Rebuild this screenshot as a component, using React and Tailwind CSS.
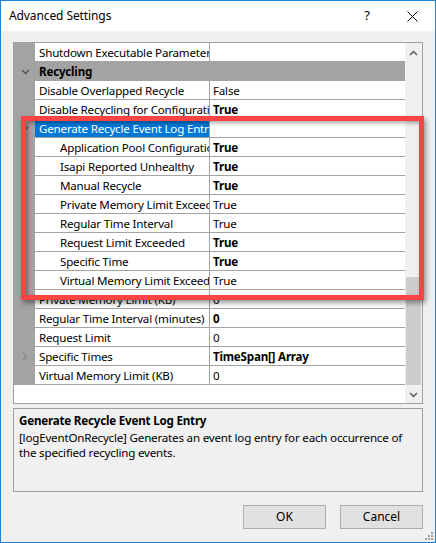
const font = { fontFamily: '"Noto Sans", "Liberation Sans", sans-serif' };

const rows = [
  { name: 'Shutdown Executable Parameter', value: '' },
  { name: 'Recycling', category: true, chevron: 'down' },
  { name: 'Disable Overlapped Recycle', value: 'False' },
  { name: 'Disable Recycling for Configuration Changes', value: 'True', bold: true },
  { name: 'Generate Recycle Event Log Entry', value: '', selected: true, chevron: 'down' },
  { name: 'Application Pool Configuration Changed', value: 'True', bold: true, indent: true },
  { name: 'Isapi Reported Unhealthy', value: 'True', bold: true, indent: true },
  { name: 'Manual Recycle', value: 'True', bold: true, indent: true },
  { name: 'Private Memory Limit Exceeded', value: 'True', indent: true },
  { name: 'Regular Time Interval', value: 'True', indent: true },
  { name: 'Request Limit Exceeded', value: 'True', bold: true, indent: true },
  { name: 'Specific Time', value: 'True', bold: true, indent: true },
  { name: 'Virtual Memory Limit Exceeded', value: 'True', indent: true },
  { name: 'Private Memory Limit (KB)', value: '0' },
  { name: 'Regular Time Interval (minutes)', value: '0', bold: true },
  { name: 'Request Limit', value: '0' },
  { name: 'Specific Times', value: 'TimeSpan[] Array', bold: true, chevron: 'right' },
  { name: 'Virtual Memory Limit (KB)', value: '0' },
];

const Chevron = ({ dir }) => (
  <svg width="9" height="9" viewBox="0 0 9 9" fill="none" stroke="#505050" strokeWidth="1.3">
    {dir === 'down' && <path d="M1 3 L4.5 6.5 L8 3" />}
    {dir === 'right' && <path d="M3 1 L6.5 4.5 L3 8" stroke="#888" />}
    {dir === 'up' && <path d="M1 6 L4.5 2.5 L8 6" />}
  </svg>
);

const Row = ({ r }) => {
  if (r.category) {
    return (
      <div className="flex h-[19px] bg-[#a3a3a3] border-b border-[#a3a3a3]">
        <div className="w-[21px] flex items-center justify-center pl-[1px]">
          <Chevron dir="down" />
        </div>
        <div className="pl-[4px] font-bold text-[11.6px] tracking-[-0.2px] leading-[19px] text-black">{r.name}</div>
      </div>
    );
  }
  return (
    <div className="flex h-[19px] border-b border-[#a3a3a3]">
      <div className="w-[21px] shrink-0 bg-[#a3a3a3] flex items-center justify-center">
        {r.chevron && <Chevron dir={r.chevron} />}
      </div>
      <div
        className={`w-[175px] shrink-0 border-r border-[#a3a3a3] overflow-hidden whitespace-nowrap text-[11.6px] tracking-[-0.2px] leading-[19px] ${
          r.indent ? 'pl-[25px]' : 'pl-[4px]'
        } ${r.selected ? 'bg-[#0078d7] text-white' : 'bg-white text-black'}`}
      >
        {r.name}
      </div>
      <div
        className={`flex-1 bg-white pl-[3px] text-[11.6px] tracking-[-0.2px] leading-[19px] text-black whitespace-nowrap overflow-hidden ${
          r.bold ? 'font-bold' : ''
        }`}
      >
        {r.value}
      </div>
    </div>
  );
};

export default function App() {
  return (
    <div
      className="relative w-[436px] h-[543px] border border-[#1883d7] bg-[#f0f0f0] flex flex-col overflow-hidden"
      style={font}
    >
      {/* title bar */}
      <div className="h-[30px] bg-white flex items-center shrink-0">
        <div className="pl-[8px] text-[12px] tracking-[-0.1px] text-black flex-1">Advanced Settings</div>
        <div className="w-[46px] text-center text-[13px] text-black mr-[-1px]">?</div>
        <div className="w-[46px] flex items-center justify-center">
          <svg width="11" height="11" viewBox="0 0 11 11" stroke="#000" strokeWidth="1">
            <path d="M0.5 0.5 L10.5 10.5 M10.5 0.5 L0.5 10.5" />
          </svg>
        </div>
      </div>

      <div className="flex-1 flex flex-col px-[12px] pt-[11px]">
        {/* property grid */}
        <div className="h-[362px] border border-[#a0a0a0] bg-white flex">
          <div className="flex-1 flex flex-col">
            {rows.map((r, i) => (
              <Row key={i} r={r} />
            ))}
          </div>
          <div className="w-[17px] bg-[#f0f0f0] flex flex-col items-center">
            <div className="h-[17px] flex items-center justify-center mt-[2px]">
              <Chevron dir="up" />
            </div>
            <div className="flex-1 w-full flex flex-col">
              <div className="h-[215px]" />
              <div className="h-[108px] mx-[1px] bg-[#cdcdcd]" />
            </div>
            <div className="h-[17px] flex items-center justify-center">
              <Chevron dir="down" />
            </div>
          </div>
        </div>

        {/* description */}
        <div className="mt-[4px] h-[84px] border border-[#a0a0a0] bg-[#f0f0f0] px-[5px] pt-[2px] text-[11.6px] tracking-[-0.2px] text-black">
          <div className="font-bold leading-[19px]">Generate Recycle Event Log Entry</div>
          <div className="leading-[15px]">
            [logEventOnRecycle] Generates an event log entry for each occurrence of the specified recycling events.
          </div>
        </div>

        {/* buttons */}
        <div className="flex justify-end gap-[14px] mt-[13px]">
          <button className="w-[83px] h-[24px] border border-[#adadad] bg-[#e1e1e1] text-[12px] text-black">OK</button>
          <button className="w-[83px] h-[24px] border border-[#adadad] bg-[#e1e1e1] text-[12px] text-black">Cancel</button>
        </div>
      </div>

      {/* resize grip */}
      <svg className="absolute right-[1px] bottom-[1px]" width="10" height="10" viewBox="0 0 10 10" fill="#a0a0a0">
        <rect x="7" y="1" width="2" height="2" />
        <rect x="4" y="4" width="2" height="2" />
        <rect x="7" y="4" width="2" height="2" />
        <rect x="1" y="7" width="2" height="2" />
        <rect x="4" y="7" width="2" height="2" />
        <rect x="7" y="7" width="2" height="2" />
      </svg>

      {/* red highlight */}
      <div className="absolute left-[20px] top-[115px] w-[403px] h-[184px] border-[5px] border-[#f94444] shadow-[inset_2px_2px_4px_rgba(0,0,0,0.35),2px_3px_5px_rgba(0,0,0,0.4)]" />
    </div>
  );
}
